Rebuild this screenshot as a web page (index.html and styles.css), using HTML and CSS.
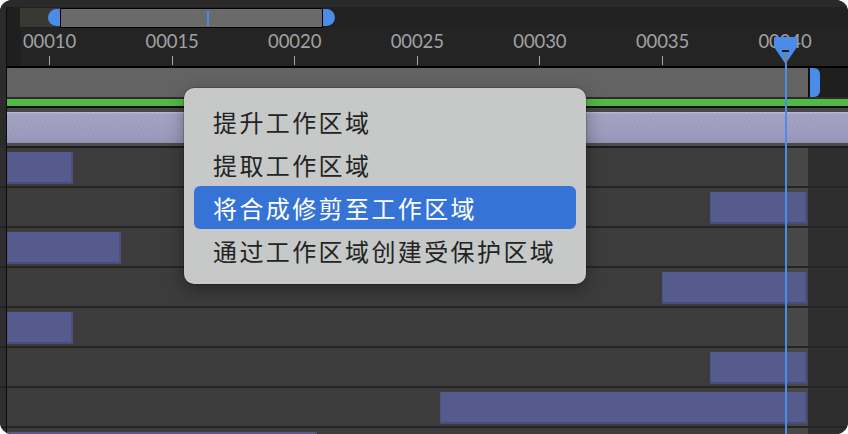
FILE: index.html
```html
<!DOCTYPE html>
<html lang="zh">
<head>
<meta charset="utf-8">
<title>Timeline</title>
<link rel="stylesheet" href="styles.css">
</head>
<body>
<div class="frame">
  <div class="topstrip"></div>
  <div class="body">
    <div class="gutter"></div>
    <div class="main">
      <div class="nav">
        <div class="nav-lead"></div>
        <div class="nav-dim"><span class="nav-hl"></span></div>
        <div class="nav-bar"><span class="nav-tick"></span></div>
        <span class="nav-hr"></span>
      </div>
      <div class="ruler">
        <div class="ticks">
          <div class="tk"><span class="lbl">00010</span><span class="tkm"></span></div>
          <div class="tk"><span class="lbl">00015</span><span class="tkm"></span></div>
          <div class="tk"><span class="lbl">00020</span><span class="tkm"></span></div>
          <div class="tk"><span class="lbl">00025</span><span class="tkm"></span></div>
          <div class="tk"><span class="lbl">00030</span><span class="tkm"></span></div>
          <div class="tk"><span class="lbl">00035</span><span class="tkm"></span></div>
          <div class="tk"><span class="lbl">00040</span><span class="tkm"></span></div>
        </div>
      </div>
      <div class="wa">
        <div class="wa-bar"></div>
        <div class="wa-handle"></div>
      </div>
      <div class="gap"></div>
      <div class="green"></div>
      <div class="blk"></div>
      <div class="g4"></div>
      <div class="lav"></div>
      <div class="g3"></div>
      <div class="blk2"></div>
      <div class="row"><div class="clip" style="margin-left:0;width:66px"></div></div>
      <div class="row"><div class="clip" style="margin-left:703px;width:97px"></div></div>
      <div class="row"><div class="clip" style="margin-left:0;width:114px"></div></div>
      <div class="row"><div class="clip" style="margin-left:655px;width:145px"></div></div>
      <div class="row"><div class="clip" style="margin-left:0;width:66px"></div></div>
      <div class="row"><div class="clip" style="margin-left:703px;width:97px"></div></div>
      <div class="row"><div class="clip" style="margin-left:433px;width:367px"></div></div>
      <div class="row"><div class="clip" style="margin-left:0;width:310px"></div></div>
    </div>
  </div>

  <div class="cti-line"></div>
  <svg class="cti-head" width="23" height="27" viewBox="0 0 23 27">
    <path d="M1 0 H22 Q23 0 23 1 V10 L11.5 27 L0 10 V1 Q0 0 1 0 Z" fill="#4a8ce8"/>
    <rect x="8" y="13" width="7" height="2" fill="#1c1c1c"/>
    <rect x="11" y="15" width="2" height="11" fill="#7d8088"/>
  </svg>

  <div class="menu">
    <div class="item">提升工作区域</div>
    <div class="item">提取工作区域</div>
    <div class="item active">将合成修剪至工作区域</div>
    <div class="item">通过工作区域创建受保护区域</div>
  </div>
</div>
</body>
</html>
```
FILE: styles.css
```css
* { box-sizing: border-box; }
html, body { margin: 0; padding: 0; background: #ffffff; }

.frame {
  position: relative;
  width: 848px;
  height: 434px;
  border-radius: 12px;
  overflow: hidden;
  background: #2a2a2a;
}

.topstrip { height: 7px; background: #2a2a2a; }

.body { display: flex; height: 427px; }

.gutter {
  flex: none;
  width: 7px;
  border-right: 1px solid #0c0c0c;
  background:
    linear-gradient(#2b2b2b, #2b2b2b) 0 0 / 100% 141px no-repeat,
    repeating-linear-gradient(to bottom, #2f2f2f 0 38px, #232323 38px 40px) 0 141px / 100% 40px repeat-y;
}

.main {
  flex: 1;
  display: flex;
  flex-direction: column;
  overflow: hidden;
}

/* navigator */
.nav {
  flex: none;
  height: 21px;
  display: flex;
  background: #212121;
}
.nav-lead { width: 13px; flex: none; background: #1f1f1f; }
.nav-dim {
  flex: none;
  width: 40px;
  height: 19px;
  margin-top: 1px;
  background: #3a3832;
  display: flex;
  justify-content: flex-end;
  align-items: center;
}
.nav-hl {
  width: 12px;
  height: 17px;
  background: #4a8ce8;
  border-radius: 9px 0 0 9px;
}
.nav-bar {
  flex: none;
  width: 263px;
  height: 20px;
  margin-top: 1px;
  border: 1px solid #000;
  background: #6a6a6a;
  padding-left: 146px;
  padding-top: 2px;
}
.nav-tick {
  display: block;
  width: 2px;
  height: 15px;
  background: #4a8ae8;
}
.nav-hr {
  flex: none;
  width: 12px;
  height: 17px;
  margin-top: 2px;
  background: #4a8ce8;
  border-radius: 0 9px 9px 0;
}

/* ruler */
.ruler {
  flex: none;
  height: 38px;
  overflow: hidden;
  background: linear-gradient(to right, #1f1f1f 0 14px, #242424 14px);
}
.ticks {
  display: flex;
  margin-left: -18.8px;
  padding-top: 4px;
}
.tk {
  flex: none;
  width: 122.6px;
  display: flex;
  flex-direction: column;
  align-items: center;
}
.lbl {
  font-family: "Lato", "Open Sans", sans-serif;
  font-weight: 400;
  font-size: 18.5px;
  line-height: 18px;
  color: #a2a2a2;
  letter-spacing: -0.1px;
}
.tkm {
  width: 1px;
  height: 9px;
  margin-top: 6px;
  background: #a8a8a8;
}

/* work area bar */
.wa {
  flex: none;
  height: 31px;
  display: flex;
  border-top: 2px solid #000;
  background: #1f1f1f;
}
.wa-bar {
  flex: none;
  width: 803px;
  height: 29px;
  background: #636363;
  border-right: 2px solid #111;
}
.wa-handle {
  flex: none;
  width: 10px;
  height: 29px;
  background: #4a8ce8;
  border-radius: 0 6px 6px 0;
}

.gap { flex: none; height: 2px; background: #2c2c2c; }
.green { flex: none; height: 7px; background: #52b846; }
.blk { flex: none; height: 2px; background: #0e0e0e; }
.g4 { flex: none; height: 4px; background: #474747; }
.lav {
  flex: none;
  height: 31px;
  background:
    repeating-linear-gradient(37deg, rgba(255,255,255,0.025) 0 1px, rgba(0,0,0,0) 1px 3px),
    repeating-linear-gradient(-61deg, rgba(0,0,0,0.025) 0 1px, rgba(0,0,0,0) 1px 4px),
    linear-gradient(to bottom, #c8c8dc 0, #acabc9 1px, #a3a2c3 3px, #9c9bbd 24px, #9392b4 31px);
}
.g3 { flex: none; height: 3px; background: #4b4b4b; }
.blk2 { flex: none; height: 2px; background: #1c1c1c; }

/* layer rows */
.row {
  flex: none;
  height: 40px;
  padding-top: 4px;
  display: flex;
  align-items: flex-start;
  border-bottom: 2px solid #262626;
  background: linear-gradient(to right, #3c3c3c 0 779px, #474747 779px 801px, #2e2e2e 801px);
}
.clip {
  flex: none;
  height: 32px;
  background: #555b8c;
  border-left: 1px solid #4d5384;
  border-right: 2px solid #4b5182;
  border-bottom: 2px solid #464c7b;
}

/* current time indicator */
.cti-line {
  position: absolute;
  left: 785px;
  top: 58px;
  bottom: 0;
  width: 2px;
  background: #4a8ce8;
}
.cti-head {
  position: absolute;
  left: 774px;
  top: 37px;
  display: block;
}

/* context menu */
.menu {
  position: absolute;
  left: 184px;
  top: 88px;
  width: 402px;
  height: 196px;
  padding: 12px 10px;
  border-radius: 10px;
  background: #c6c9c8;
  box-shadow: 0 0 0 0.5px rgba(0, 0, 0, 0.35), 0 6px 18px rgba(0, 0, 0, 0.35);
}
.item {
  height: 43px;
  line-height: 43px;
  padding-left: 19px;
  border-radius: 6px;
  font-family: "Noto Sans CJK SC", "Noto Sans", sans-serif;
  font-size: 24px;
  letter-spacing: 2.4px;
  color: #232323;
  white-space: nowrap;
}
.item.active {
  background: #3673d7;
  color: #ffffff;
}
```
